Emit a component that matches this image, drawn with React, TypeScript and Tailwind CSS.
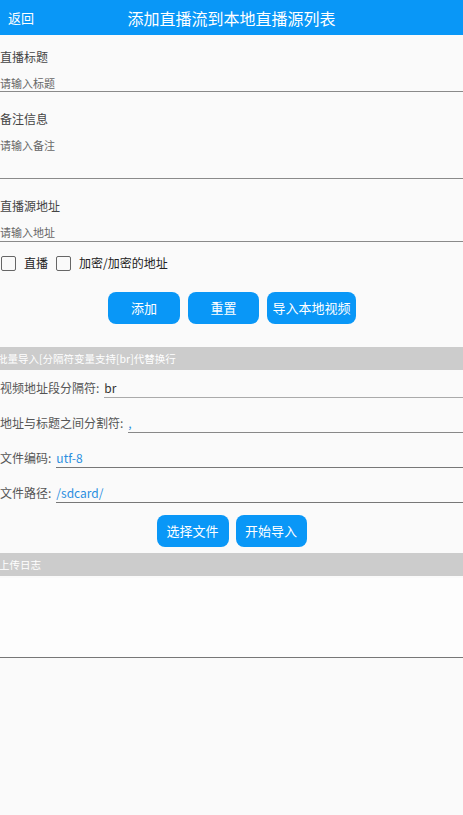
import React from 'react';

const font = { fontFamily: '"Noto Sans CJK SC", "Noto Sans", sans-serif' };

function Field({ label, placeholder, top, bottom }: { label: string; placeholder: string; top: string; bottom: string }) {
  return (
    <div className={`flex flex-col ${top}`}>
      <div className="text-[12px] leading-[18px] text-[#444]">{label}</div>
      <div className={`pt-[9px] ${bottom} text-[11px] leading-[16px] text-[#666] border-b border-[#8a8a8a]`}>
        {placeholder}
      </div>
    </div>
  );
}

function Btn({ children, w }: { children: React.ReactNode; w: string }) {
  return (
    <button className={`h-[32px] ${w} rounded-[8px] bg-[#0997f7] text-white text-[13px] flex items-center justify-center`}>
      {children}
    </button>
  );
}

function Row({ label, value, blue, line }: { label: string; value: string; blue?: boolean; line: string }) {
  return (
    <div className="h-[35px] flex items-start pt-[9px]">
      <span className="text-[12px] leading-[18px] text-[#555]">{label}</span>
      <div className={`flex-1 ml-[5px] text-[12px] leading-[18px] border-b ${line} ${blue ? 'text-[#2a8ee0]' : 'text-[#333]'}`}>
        {value}
      </div>
    </div>
  );
}

export default function App() {
  return (
    <div className="min-h-screen w-full bg-[#fafafa]" style={font}>
      {/* Top bar */}
      <header className="h-[35px] bg-[#0997f7] flex items-center relative">
        <span className="pl-[8px] text-[13px] text-white">返回</span>
        <span className="absolute left-0 right-0 text-center text-[16px] text-white pointer-events-none">
          添加直播流到本地直播源列表
        </span>
      </header>

      <Field label="直播标题" placeholder="请输入标题" top="mt-[13px]" bottom="pb-0" />
      <Field label="备注信息" placeholder="请输入备注" top="mt-[18px]" bottom="pb-[25px]" />
      <Field label="直播源地址" placeholder="请输入地址" top="mt-[18px]" bottom="pb-[1px]" />

      {/* Checkboxes */}
      <div className="h-[42px] flex items-center gap-[8px] text-[12px] text-[#222]">
        <span className="ml-[1px] w-[15px] h-[15px] border-[1.5px] border-[#666] rounded-[2px]" />
        <span>直播</span>
        <span className="w-[15px] h-[15px] border-[1.5px] border-[#666] rounded-[2px]" />
        <span>加密/加密的地址</span>
      </div>

      <div className="flex justify-center gap-[8px] pl-[1px] mt-[8px]">
        <Btn w="w-[72px]">添加</Btn>
        <Btn w="w-[71px]">重置</Btn>
        <Btn w="w-[89px]">导入本地视频</Btn>
      </div>

      <div className="mt-[23px] h-[23px] bg-[#cccccc] flex items-center text-[10.5px] text-white overflow-hidden whitespace-nowrap">
        <span className="-ml-[3px]">批量导入[分隔符变量支持[br]代替换行</span>
      </div>

      <Row label="视频地址段分隔符:" value="br" line="border-[#aaa]" />
      <Row label="地址与标题之间分割符:" value="," blue line="border-[#888]" />
      <Row label="文件编码:" value="utf-8" blue line="border-[#777]" />
      <Row label="文件路径:" value="/sdcard/" blue line="border-[#777]" />

      <div className="flex justify-center gap-[7px] pt-[5px] pb-[6px]">
        <Btn w="w-[72px]">选择文件</Btn>
        <Btn w="w-[71px]">开始导入</Btn>
      </div>

      <div className="h-[23px] bg-[#cccccc] flex items-center text-[10.5px] text-white overflow-hidden">
        <span className="-ml-[1px]">上传日志</span>
      </div>

      <div className="h-[80px] bg-[#fdfdfd] border-b border-[#777] mt-[2px]" />
    </div>
  );
}
